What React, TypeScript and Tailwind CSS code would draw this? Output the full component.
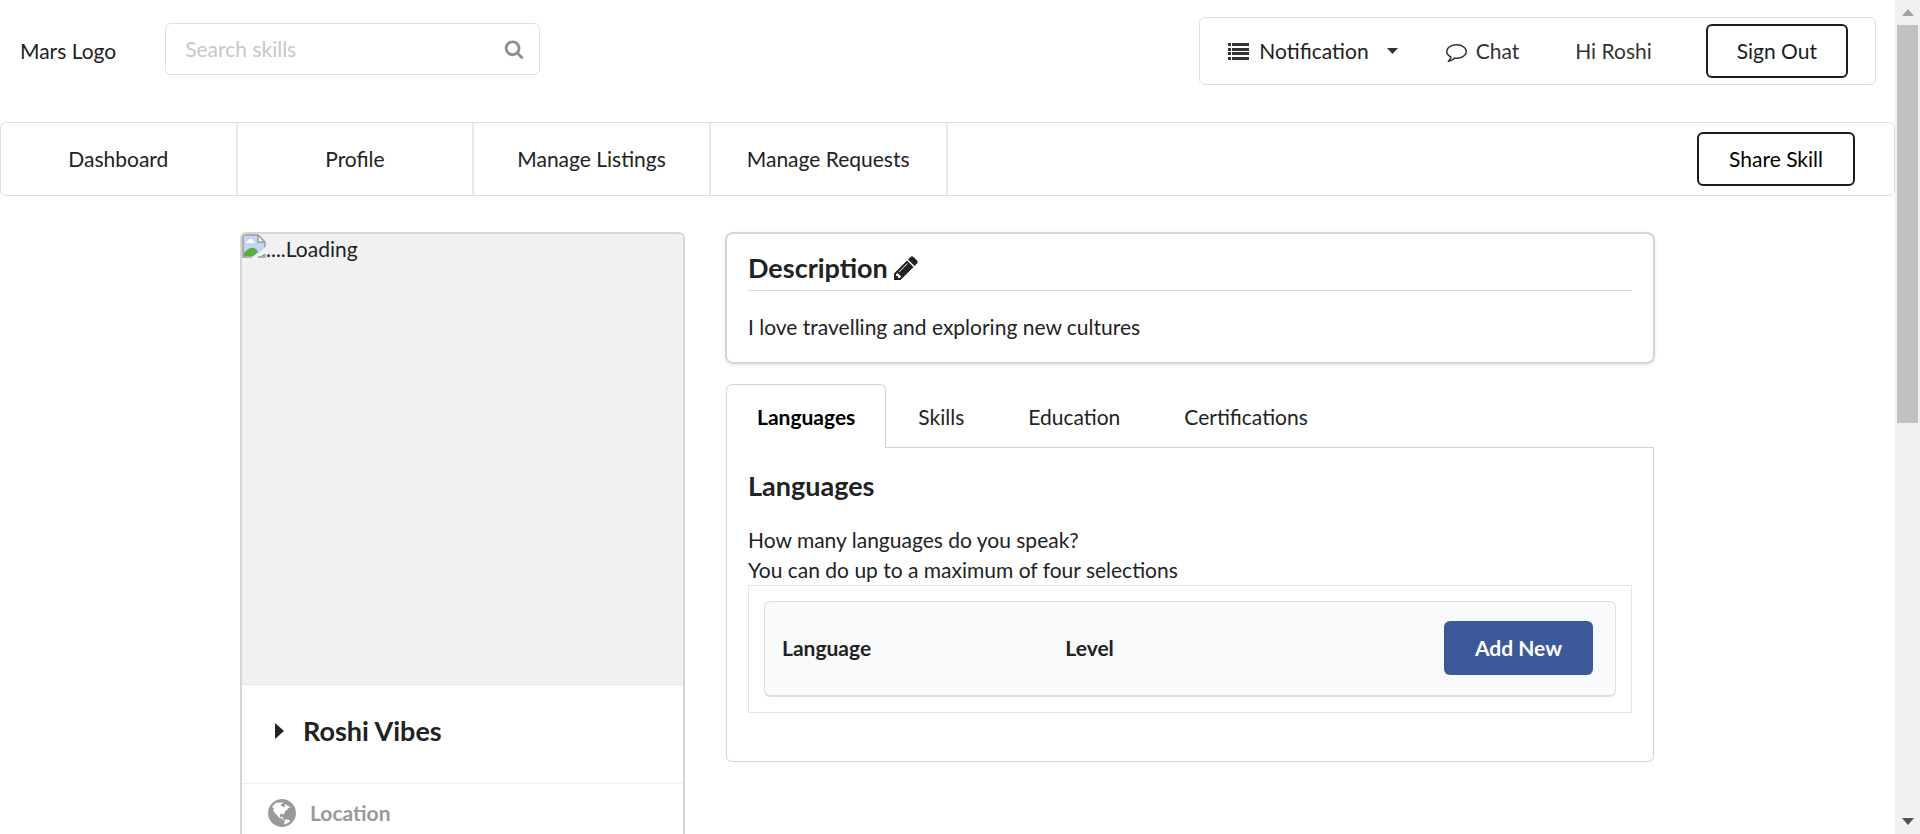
import React from "react";

type IconProps = { className?: string };

function SearchIcon({ className }: IconProps) {
  return (
    <svg viewBox="0 0 1792 1792" fill="currentColor" aria-hidden="true" className={className}>
      <path d="M1216 832q0-185-131.5-316.5t-316.5-131.5-316.5 131.5-131.5 316.5 131.5 316.5 316.5 131.5 316.5-131.5 131.5-316.5zm512 832q0 52-38 90t-90 38q-54 0-90-38l-343-342q-179 124-399 124-143 0-273.5-55.5t-225-150-150-225-55.5-273.5 55.5-273.5 150-225 225-150 273.5-55.5 273.5 55.5 225 150 150 225 55.5 273.5q0 220-124 399l343 343q37 37 37 90z" />
    </svg>
  );
}

function ListIcon({ className }: IconProps) {
  return (
    <svg viewBox="0 0 21 17" fill="currentColor" aria-hidden="true" className={className}>
      {[0, 5, 9, 14].map((y) => (
        <g key={y}>
          <rect x="0" y={y} width="3" height="3" />
          <rect x="4" y={y} width="17" height="3" />
        </g>
      ))}
    </svg>
  );
}

function CommentIcon({ className }: IconProps) {
  return (
    <svg viewBox="0 0 1792 1792" fill="currentColor" aria-hidden="true" className={className}>
      <path d="M896 384q-204 0-381.5 69.5t-282 187.5-104.5 255q0 112 71.5 213.5t201.5 175.5l87 50-27 96q-24 91-70 172 152-63 275-171l43-38 57 6q69 8 130 8 204 0 381.5-69.5t282-187.5 104.5-255-104.5-255-282-187.5-381.5-69.5zm896 512q0 174-120 321.5t-326 233-450 85.5q-70 0-145-8-198 175-460 242-49 14-114 22h-5q-15 0-27-10.5t-16-27.5v-1q-3-4-.5-12t2-10 4.5-9.5l6-9 7-8.5 8-9q7-8 31-34.5t34.5-38 31-39.5 32.5-51 27-59 26-76q-157-89-247.5-220t-90.5-281q0-174 120-321.5t326-233 450-85.5 450 85.5 326 233 120 321.5z" />
    </svg>
  );
}

function PencilIcon({ className }: IconProps) {
  return (
    <svg viewBox="128 128 1536 1536" fill="currentColor" aria-hidden="true" className={className}>
      <path d="M491 1536l91-91-235-235-91 91v107h128v128h107zm523-928q0-22-22-22-10 0-17 7l-542 542q-7 7-7 17 0 22 22 22 10 0 17-7l542-542q7-7 7-17zm-54-192l416 416-832 832h-416v-416zm683 96q0 53-37 90l-166 166-416-416 166-165q36-38 90-38 53 0 91 38l235 234q37 39 37 91z" />
    </svg>
  );
}

function GlobeIcon({ className }: IconProps) {
  return (
    <svg viewBox="128 128 1536 1536" fill="currentColor" aria-hidden="true" className={className}>
      <path d="M896 128q209 0 385.5 103t279.5 279.5 103 385.5-103 385.5-279.5 279.5-385.5 103-385.5-103-279.5-279.5-103-385.5 103-385.5 279.5-279.5 385.5-103zm274 521q-2 1-9.5 9.5t-13.5 9.5q2 0 4.5-5t5-11 3.5-7q6-7 22-15 14-6 52-12 34-8 51 11-2-2 9.5-13t14.5-12q3-2 15-4.5t15-7.5l2-22q-12 1-17.5-7t-6.5-21q0 2-6 8 0-7-4.5-8t-11.5 1-9 1q-10-3-15-7.5t-8-16.5-4-15q-2-5-9.5-11t-9.5-10q-1-2-2.5-5.5t-3-6.5-4-5.5-5.5-2.5-7 5-7.5 10-4.5 5q-3-2-6-1.5t-4.5 1-4.5 3-5 3.5q-3 2-8.5 3t-8.5 2q15-5-1-11-10-4-16-3 9-4 7.5-12t-8.5-14h5q-1-4-8.5-8.5t-17.5-8.5-13-6q-8-5-34-9.5t-33-.5q-5 6-4.5 10.5t4 14 3.5 12.5q1 6-5.5 13t-6.5 12q0 7 14 15.5t10 21.5q-3 8-16 16t-16 12q-5 8-1.5 18.5t10.5 16.5q2 2 1.5 4t-3.5 4.5-5.5 4-6.5 3.5l-3 2q-11 5-20.5-6t-13.5-26q-7-25-16-30-23-8-29 1-5-13-41-26-25-9-58-4 6-1 0-15-7-15-19-12 3-6 4-17.5t1-13.5q3-13 12-23 1-1 7-8.5t9.5-13.5.5-6q35 4 50-11 5-5 11.5-17t10.5-17q9-6 14-5.5t14.5 5.5 14.5 5q14 1 15.5-11t-7.5-20q12 1 3-17-4-7-8-9-12-4-27 5-8 4 2 8-1-1-9.5 10.5t-16.5 17.5-16-5q-1-1-5.5-13.5t-9.5-13.5q-8 0-16 15 3-8-11-15t-24-8q19-12-8-27-7-4-20.5-5t-19.5 4q-5 7-5.5 11.5t5 8 10.5 5.5 11.5 4 8.5 3q14 10 8 14-2 1-8.5 3.5t-11.5 4.5-6 4q-3 4 0 14t-2 14q-5-5-9-17.5t-7-16.5q7 9-25 6l-10-1q-4 0-16 2t-20.5 1-13.5-8q-4-8 0-20 1-4 4-2-4-3-11-9.5t-10-8.5q-46 15-94 41 6 1 12-1 5-2 13-6.5t10-5.5q34-14 42-7l5-5q14 16 20 25-7-4-30-1-20 6-22 12 7 12 5 18-4-3-11.5-10t-14.5-11-15-5q-16 0-22 1-146 80-235 222 7 7 12 8 4 1 5 9t2.5 11 11.5-3q9 8 3 19 1-1 44 27 19 17 21 21 3 11-10 18-1-2-9-9t-9-4q-3 5 .5 18.5t10.5 12.5q-7 0-9.5 16t-2.5 35.5-1 23.5l2 1q-3 12 5.5 34.5t21.5 19.5q-13 3 20 43 6 8 8 9 3 2 12 7.5t15 10 10 10.5q4 5 10 22.5t14 23.5q-2 6 9.5 20t10.5 23q-1 0-2.5 1t-2.5 1q3 7 15.5 14t15.5 13q1 3 2 10t3 11 8 2q2-20-24-62-15-25-17-29-3-5-5.5-15.5t-4.5-14.5q2 0 6 1.5t8.5 3.5 7.5 4 2 3q-3 7 2 17.5t12 18.5 17 19 12 13q6 6 14 19.5t0 13.5q9 0 20 10.5t17 19.5q5 8 8 26t5 24q2 7 8.5 13.5t12.5 9.5l16 8 13 7q5 2 18.5 10.5t21.5 11.5q10 4 16 4t14.5-2.5 13.5-3.5q15-2 29 15t21 21q36 19 55 11-2 1 .5 7.5t8 15.5 9 14.5 5.5 8.5q5 6 18 15t18 15q6-4 7-9-3 8 7 20t18 10q14-3 14-32-31 15-49-18 0-1-2.5-5.5t-4-8.5-2.5-8.5 0-7.5 5-3q9 0 10-3.5t-2-12.5-4-13q-1-8-11-20t-12-15q-5 9-16 8t-16-9q0 1-1.5 5.5t-1.5 6.5q-13 0-15-1 1-3 2.5-17.5t3.5-22.5q1-4 5.5-12t7.5-14.5 4-12.5-4.5-9.5-17.5-2.5q-19 1-26 20-1 3-3 10.5t-5 11.5-9 7q-7 3-24 2t-24-5q-13-8-22.5-29t-9.5-37q0-10 2.5-26.5t3-25-5.5-24.5q3-2 9-9.5t10-10.5q2-1 4.5-1.5t4.5 0 4-1.5 3-6q-1-1-4-3-3-3-4-3 7 3 28.5-1.5t27.5 1.5q15 11 22-2 0-1-2.5-9.5t-.5-13.5q5 27 29 9 3 3 15.5 5t17.5 5q3 2 7 5.5t5.5 4.5 5-.5 8.5-6.5q10 14 12 24 11 40 19 44 7 3 11 2t4.5-9.5 0-14-1.5-12.5l-1-8v-18l-1-8q-15-3-18.5-12t1.5-18.5 15-18.5q1-1 8-3.5t15.5-6.5 12.5-8q21-19 15-35 7 0 11-9-1 0-5-3t-7.5-5-4.5-2q9-5 2-16 5-3 7.5-11t7.5-10q9 12 21 2 7-8 1-16 5-7 20.5-10.5t18.5-9.5q7 2 8-2t1-12 3-12q4-5 15-9t13-5l17-11q3-4 0-4 18 2 31-11 10-11-6-20 3-6-3-9.5t-15-5.5q3-1 11.5-.5t10.5-1.5q15-10-7-16-17-5-43 12zm-163 877q206-36 351-189-3-3-12.5-4.5t-12.5-3.5q-18-7-24-8 1-7-2.5-13t-8-9-12.5-8-11-7q-2-2-7-6t-7-5.5-7.5-4.5-8.5-2-10 1l-3 1q-3 1-5.5 2.5t-5.5 3-4 3 0 2.5q-21-17-36-22-5-1-11-5.5t-10.5-7-10-1.5-11.5 7q-5 5-6 15t-2 13q-7-5 0-17.5t2-18.5q-3-6-10.5-4.5t-12 4.5-11.5 8.5-9 6.5-8.5 5.5-8.5 7.5q-3 4-6 12t-5 11q-2-4-11.5-6.5t-9.5-5.5q2 10 4 35t5 38q7 31-12 48-27 25-29 40-4 22 12 26 0 7-8 20.5t-7 21.5q0 6 2 16z" />
    </svg>
  );
}

function BrokenImageIcon({ className }: IconProps) {
  return (
    <svg viewBox="0 0 24 24" aria-hidden="true" className={className}>
      <path d="M1 1h15l7 7v15H1z" fill="#c5d6f5" />
      <path d="M4 9q0-2 2-2 1-3 3-2 2 0 2 2 2 0 2 2z" fill="#fff" />
      <path d="M2 22v-3q5-6 10-5 3 1 4 4l-5 4z" fill="#5aad3a" />
      <path d="M17 22l5-4v4z" fill="#5aad3a" />
      <path d="M24 13L10 24h6l8-5z" fill="#f1f1f1" />
      <path d="M16 1v7h7z" fill="#fff" />
      <path d="M23 13V8l-7-7H1v22h9M16 1v7h7M16 23h7v-3" fill="none" stroke="#9a9a9a" strokeWidth="1.5" />
    </svg>
  );
}

const navItems = ["Dashboard", "Profile", "Manage Listings", "Manage Requests"];
const tabs = ["Skills", "Education", "Certifications"];

function Header() {
  return (
    <header className="flex items-start pt-[17px] pr-[19px]">
      <a href="#home" className="mt-[19px] ml-5 leading-[30px]">
        Mars Logo
      </a>
      <label className="mt-1.5 ml-[49px] flex h-[52px] w-[375px] items-center rounded-md border border-[#dededf] pr-[15px] pl-[19px]">
        <input
          type="text"
          aria-label="Search skills"
          placeholder="Search skills"
          className="min-w-0 flex-1 bg-transparent outline-none placeholder:text-[#c7c7c7]"
        />
        <SearchIcon className="size-5 text-[#8f8f8f]" />
      </label>
      <div className="ml-auto flex h-[68px] items-center rounded-md border border-[#dededf] pr-[27px] pl-7 text-[#333]">
        <button type="button" className="flex items-center">
          <ListIcon className="mr-2.5 h-[17px] w-[21px]" />
          <span className="text-[#222]">Notification</span>
          <svg viewBox="0 0 11 6" fill="currentColor" aria-hidden="true" className="ml-[18px] h-1.5 w-[11px]">
            <path d="M0 0h11L5.5 6z" />
          </svg>
        </button>
        <a href="#chat" className="ml-12 flex items-center">
          <CommentIcon className="mr-[9px] size-[21px]" />
          Chat
        </a>
        <span className="ml-14">Hi Roshi</span>
        <button type="button" className="ml-[54px] h-[54px] rounded-md border-2 border-[#1b1c1d] px-[29px] text-[#1b1c1d]">
          Sign Out
        </button>
      </div>
    </header>
  );
}

function MainNav() {
  return (
    <nav className="mt-[37px] flex h-[74px] items-center rounded-md border border-[#dededf]">
      {navItems.map((item) => (
        <a
          key={item}
          href="#nav"
          className="flex w-1/8 items-center justify-center self-stretch border-r-2 border-[#e8e8e9] whitespace-nowrap"
        >
          {item}
        </a>
      ))}
      <button type="button" className="mr-[39px] ml-auto h-[54px] rounded-md border-2 border-[#1b1c1d] px-[30px] text-black">
        Share Skill
      </button>
    </nav>
  );
}

function ProfileCard() {
  return (
    <aside className="w-[445px] shrink-0 overflow-hidden rounded-t-md border-2 border-b-0 border-[#d6d6d7]">
      <div className="flex h-[451px] items-start border-b border-[#e6e6e6] bg-[#f1f1f1]">
        <BrokenImageIcon className="size-6" />
        <span className="leading-[30px]">....Loading</span>
      </div>
      <details className="border-b border-[#efefef]">
        <summary className="flex h-[98px] list-none items-center pb-1.5 pl-[33px]">
          <svg viewBox="0 0 9 16" fill="currentColor" aria-hidden="true" className="h-4 w-[9px]">
            <path d="M0 0l9 8-9 8z" />
          </svg>
          <span className="ml-[19px] text-[27px] font-bold">Roshi Vibes</span>
        </summary>
      </details>
      <div className="flex items-center pt-3.5 pb-12 pl-[26px] font-bold text-[#999]">
        <GlobeIcon className="mr-3.5 size-7" />
        Location
      </div>
    </aside>
  );
}

function Description() {
  return (
    <section className="rounded-lg border-2 border-[#d6d6d7] px-[21px] pt-3.5 pb-5 shadow-[0_1px_3px_rgba(34,36,38,0.12)]">
      <div className="flex h-[43px] items-center gap-1.5 border-b border-[#dcdcdd] pb-0.5">
        <h3 className="text-[27px] font-bold">Description</h3>
        <button type="button" aria-label="Edit description">
          <PencilIcon className="size-6" />
        </button>
      </div>
      <p className="mt-[21px] leading-[30px]">I love travelling and exploring new cultures</p>
    </section>
  );
}

function Languages() {
  return (
    <section className="mx-px mt-5">
      <div role="tablist" className="flex h-16 border-b border-[#d4d4d5]">
        <button
          type="button"
          role="tab"
          aria-selected="true"
          className="-mb-px rounded-t-md border border-b-0 border-[#d4d4d5] bg-white px-[30px] font-bold text-black"
        >
          Languages
        </button>
        {tabs.map((tab) => (
          <button key={tab} type="button" role="tab" aria-selected="false" className="px-8 pt-0.5">
            {tab}
          </button>
        ))}
      </div>
      <div role="tabpanel" className="rounded-b-md border border-t-0 border-[#d4d4d5] px-[21px] pt-5 pb-12">
        <h3 className="text-[27px] leading-9 font-bold">Languages</h3>
        <p className="mt-[21px] leading-[30px]">
          How many languages do you speak?
          <br />
          You can do up to a maximum of four selections
        </p>
        <div className="border border-[#e4e4e5] p-[15px]">
          <div className="overflow-hidden rounded-md border border-b-2 border-[#dededf] bg-[#f9fafb]">
            <table className="w-full table-fixed text-left">
              <thead>
                <tr className="h-[93px]">
                  <th scope="col" className="w-1/3 pb-0.5 pl-[17px] font-bold">
                    Language
                  </th>
                  <th scope="col" className="w-1/3 pb-0.5 pl-[17px] font-bold">
                    Level
                  </th>
                  <th scope="col" className="w-1/3 pr-[22px] pb-0.5 text-right">
                    <button type="button" className="h-[54px] rounded-md bg-[#3b5998] px-[31px] font-bold text-white">
                      Add New
                    </button>
                  </th>
                </tr>
              </thead>
            </table>
          </div>
        </div>
      </div>
    </section>
  );
}

function ScrollRail() {
  return (
    <div aria-hidden="true" className="flex w-[25px] shrink-0 flex-col items-center bg-[#f1f1f1]">
      <svg viewBox="0 0 25 25" className="size-[25px] shrink-0">
        <path d="M7 16h12l-6-7z" fill="#a3a3a3" />
      </svg>
      <div className="h-[398px] w-[21px] bg-[#c1c1c1]" />
      <svg viewBox="0 0 25 25" className="mt-auto size-[25px] shrink-0">
        <path d="M7 9h12l-6 7z" fill="#505050" />
      </svg>
    </div>
  );
}

export default function App() {
  return (
    <div className="flex h-screen overflow-hidden bg-white font-['Lato',sans-serif] text-[21px] leading-[30px] text-[#212223]">
      <div className="min-w-0 flex-1 overflow-hidden">
        <Header />
        <MainNav />
        <main className="mx-auto mt-9 flex max-w-[1415px] items-start gap-10">
          <ProfileCard />
          <div className="min-w-0 flex-1">
            <Description />
            <Languages />
          </div>
        </main>
      </div>
      <ScrollRail />
    </div>
  );
}
